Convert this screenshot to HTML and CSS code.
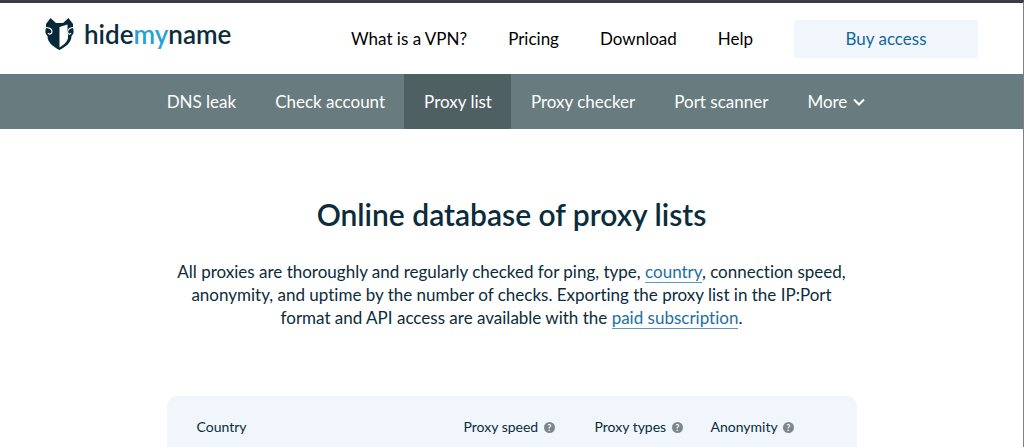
FILE: index.html
```html
<!DOCTYPE html>
<html lang="en">
<head>
    <meta charset="UTF-8">
    <meta name="viewport" content="width=device-width, initial-scale=1.0">
    <title>Online database of proxy lists</title>
    <link rel="stylesheet" href="styles.css">
</head>
<body>
    <header class="header">
        <a class="logo" href="#">
            <svg class="logo-icon" viewBox="0 0 28 34" aria-hidden="true">
                <path fill="#06293a" d="M5 1 L10.500 6 H17.500 L23 1 L27.500 7 V11 C28.500 14 28.500 17 26 19 C26 25.500 20.500 29.500 14 33 C7.500 29.500 2 25.500 2 19 C-.5 17 -.5 14 .5 11 V7 Z"/>
                <path fill="#fff" d="M14 10 L22 7.500 V12.500 C21 14 21 15.500 22.500 17 V21 C21.500 25.500 18 28 14 30.500 Z"/>
                <path fill="none" stroke="#fff" stroke-width="1.200" d="M0 10.500 C3 10.500 6.500 11.500 6.500 14.500 C6.500 17 3.500 18 2.500 16 M28 10.500 C25.500 10.500 23 11.500 22 14.500 C22 17 24.500 18 25.500 16"/>
            </svg>
            <span class="logo-text">hide<span class="logo-accent">my</span>name</span>
        </a>
        <nav class="menu">
            <a href="#">What is a VPN?</a>
            <a href="#">Pricing</a>
            <a href="#">Download</a>
            <a href="#">Help</a>
            <a class="buy" href="#">Buy access</a>
        </nav>
    </header>

    <nav class="subnav">
        <a href="#">DNS leak</a>
        <a href="#">Check account</a>
        <a class="active" href="#">Proxy list</a>
        <a href="#">Proxy checker</a>
        <a href="#">Port scanner</a>
        <button class="more" type="button">More
            <svg class="chevron" viewBox="0 0 12 8" aria-hidden="true"><path d="M1 1.500 L6 6.500 L11 1.500"/></svg>
        </button>
    </nav>

    <main class="content">
        <h1>Online database of proxy lists</h1>
        <p class="intro">All proxies are thoroughly and regularly checked for ping, type, <a href="#">country</a>, connection speed, anonymity, and uptime by the number of checks. Exporting the proxy list in the IP:Port format and API access are available with the <a href="#">paid subscription</a>.</p>
        <div class="panel">
            <table class="proxies">
                <thead>
                    <tr>
                        <th class="col-country">Country</th>
                        <th class="col-speed">Proxy speed <button class="hint" type="button" aria-label="About proxy speed">?</button></th>
                        <th class="col-types">Proxy types <button class="hint" type="button" aria-label="About proxy types">?</button></th>
                        <th>Anonymity <button class="hint" type="button" aria-label="About anonymity">?</button></th>
                    </tr>
                </thead>
            </table>
        </div>
    </main>
</body>
</html>
```
FILE: styles.css
```css
* {
    box-sizing: border-box;
}
body {
    margin: 0;
    min-height: 100vh;
    display: flex;
    flex-direction: column;
    border-top: 3px solid #3c3a46;
    border-right: 1px solid #7d8184;
    background: #fff;
    color: #0b2c3a;
    font-family: Lato, sans-serif;
    font-variant-ligatures: none;
}
a {
    color: inherit;
    text-decoration: none;
}
button {
    border: none;
    background: none;
    padding: 0;
    font: inherit;
    color: inherit;
    cursor: pointer;
}
.header {
    display: flex;
    align-items: center;
    justify-content: space-between;
    height: 71px;
    padding: 0 45px;
}
.logo {
    display: flex;
    align-items: center;
    gap: 10px;
    padding-bottom: 10px;
}
.logo-icon {
    width: 29px;
    height: 34px;
}
.logo-text {
    font-size: 26px;
    font-weight: 600;
    color: #0b2c3a;
}
.logo-accent {
    color: #2a9fd8;
}
.menu {
    display: flex;
    align-items: center;
    gap: 41px;
    font-size: 17px;
    color: #000;
}
.buy {
    width: 184px;
    padding: 9px 0;
    border-radius: 3px;
    background: #f0f6fc;
    color: #11669a;
    line-height: 20px;
    text-align: center;
}
.subnav {
    display: flex;
    justify-content: center;
    padding-left: 8px;
    background: #687b7e;
    color: #fff;
    font-size: 17px;
    line-height: 55px;
}
.subnav a,
.more {
    padding: 0 19px 0 20px;
}
.subnav .active {
    background: #4f6063;
}
.more {
    display: flex;
    align-items: center;
    gap: 6px;
}
.chevron {
    width: 12px;
    height: 8px;
    fill: none;
    stroke: #fff;
    stroke-width: 2;
}
.content {
    flex: 1;
    display: flex;
    flex-direction: column;
    width: 100%;
    max-width: 690px;
    margin: 0 auto;
    padding-top: 65px;
}
h1 {
    margin: 0;
    font-size: 30px;
    font-weight: 600;
    line-height: 40px;
    text-align: center;
}
.intro {
    margin: 26px 0 67px;
    font-size: 17px;
    line-height: 23px;
    text-align: center;
}
.intro a {
    border-bottom: 1px solid #5c9abd;
    color: #1d6f9f;
}
.panel {
    flex: 1;
    padding: 20px 0 8px 30px;
    border-radius: 10px 10px 0 0;
    background: #f0f6fc;
}
.proxies {
    width: 100%;
    border-collapse: collapse;
    table-layout: fixed;
    font-size: 14px;
    line-height: 22px;
}
.proxies th {
    padding: 0;
    font-weight: 400;
    text-align: left;
}
.col-country {
    width: 267px;
}
.col-speed {
    width: 131px;
}
.col-types {
    width: 116px;
}
.hint {
    width: 11px;
    height: 11px;
    margin-left: 2px;
    border-radius: 50%;
    background: #7b8788;
    color: #fff;
    font-size: 9px;
    font-weight: 700;
    line-height: 11px;
    text-align: center;
    vertical-align: 1px;
}
```
